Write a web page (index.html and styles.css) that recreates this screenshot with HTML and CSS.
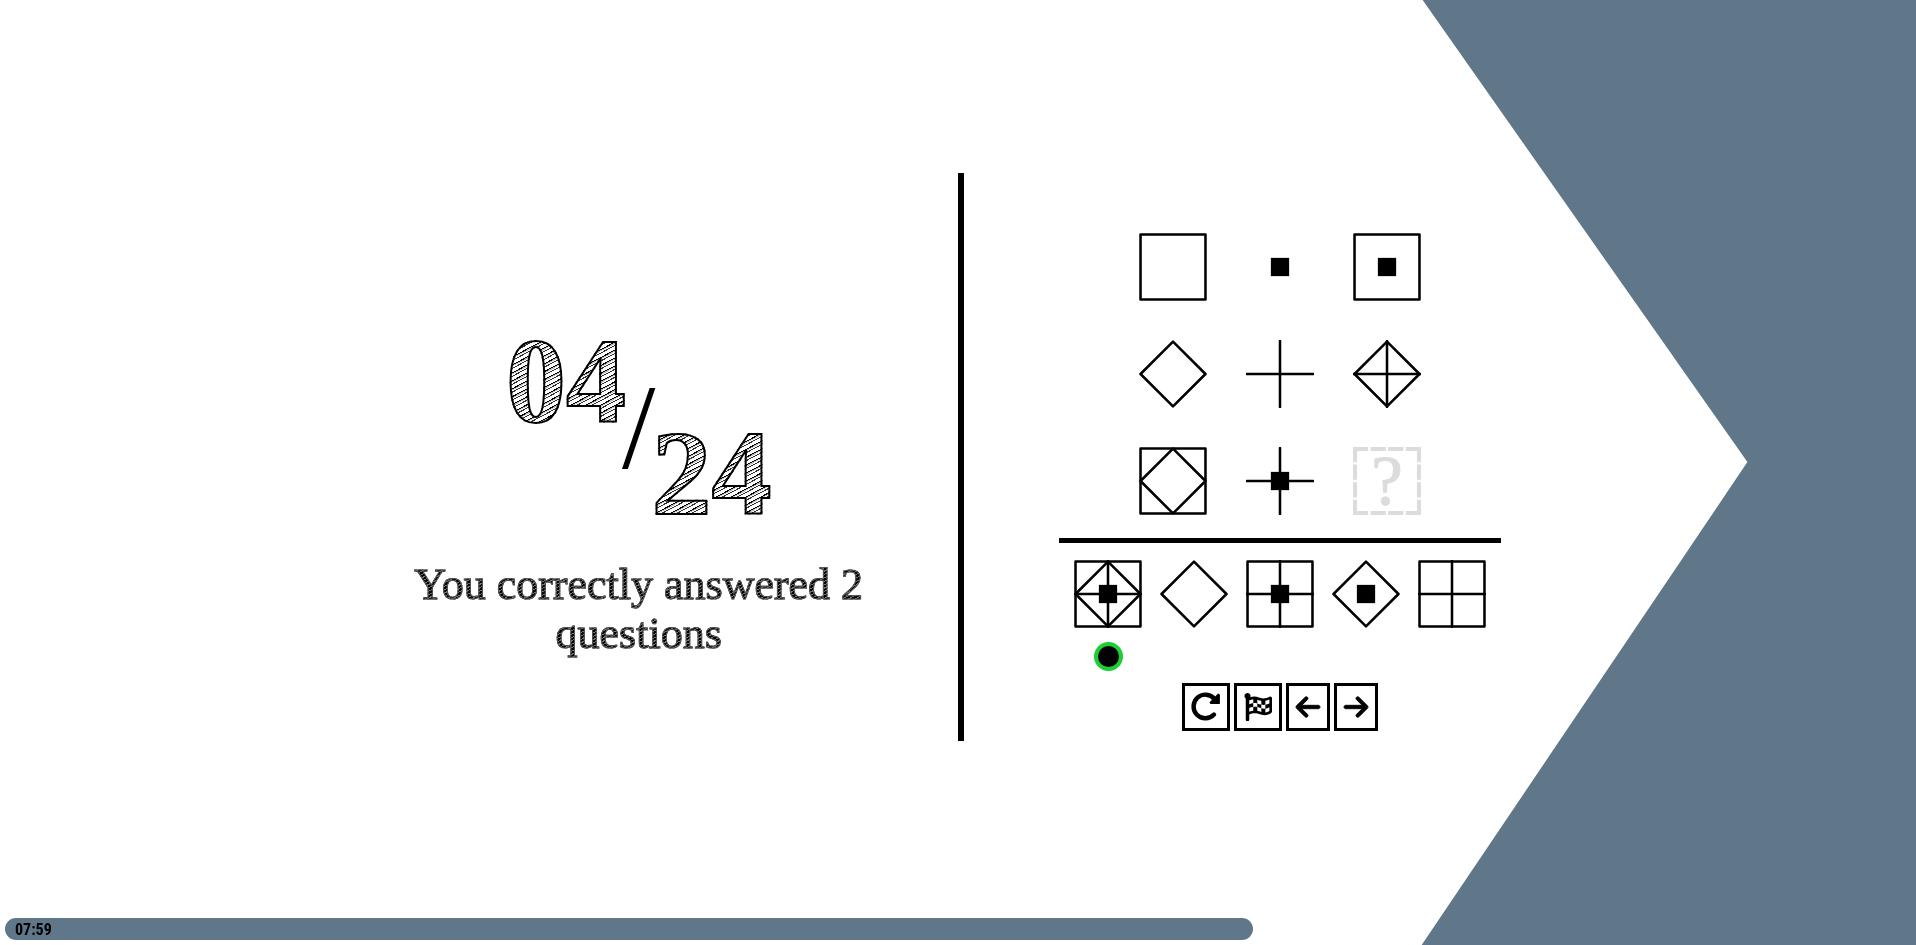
FILE: index.html
```html
<!DOCTYPE html>
<html lang="en">
<head>
<meta charset="utf-8">
<title>Matrix quiz</title>
<link rel="stylesheet" href="styles.css">
</head>
<body>
<svg class="defs" aria-hidden="true">
  <symbol id="square" viewBox="0 0 67 67"><path class="line" d="M1.5 1.5h64v64h-64z"/></symbol>
  <symbol id="diamond" viewBox="0 0 67 67"><path class="line" d="M33.5 1.5l32 32-32 32-32-32z"/></symbol>
  <symbol id="cross" viewBox="0 0 67 67"><path class="line" d="M33.5 1v65M1 33.5h65"/></symbol>
  <symbol id="dot" viewBox="0 0 67 67"><path d="M24.500 24.500h18v18h-18z"/></symbol>
</svg>
<div class="backdrop"></div>
<main class="quiz">
  <section class="score">
    <h1 class="fraction"><span class="sketch">04</span><span class="slash">/</span><span class="sketch total">24</span></h1>
    <p class="summary">You correctly answered 2 questions</p>
  </section>
  <section class="puzzle">
    <div class="board">
      <svg class="cell"><use href="#square"/></svg>
      <svg class="cell"><use href="#dot"/></svg>
      <svg class="cell"><use href="#square"/><use href="#dot"/></svg>
      <svg class="cell"><use href="#diamond"/></svg>
      <svg class="cell"><use href="#cross"/></svg>
      <svg class="cell"><use href="#diamond"/><use href="#cross"/></svg>
      <svg class="cell"><use href="#square"/><use href="#diamond"/></svg>
      <svg class="cell"><use href="#cross"/><use href="#dot"/></svg>
      <svg class="cell" viewBox="0 0 67 67"><path class="dashed" d="M0 2h67M0 65h67M2 0v67M65 0v67"/><text class="unknown" x="33.500" y="57" text-anchor="middle">?</text></svg>
    </div>
    <hr class="rule">
    <form class="answers">
      <label class="answer"><svg class="cell"><use href="#square"/><use href="#diamond"/><use href="#cross"/><use href="#dot"/></svg><input type="radio" name="answer" aria-label="Answer 1" checked></label>
      <label class="answer"><svg class="cell"><use href="#diamond"/></svg><input type="radio" name="answer" aria-label="Answer 2"></label>
      <label class="answer"><svg class="cell"><use href="#square"/><use href="#cross"/><use href="#dot"/></svg><input type="radio" name="answer" aria-label="Answer 3"></label>
      <label class="answer"><svg class="cell"><use href="#diamond"/><use href="#dot"/></svg><input type="radio" name="answer" aria-label="Answer 4"></label>
      <label class="answer"><svg class="cell"><use href="#square"/><use href="#cross"/></svg><input type="radio" name="answer" aria-label="Answer 5"></label>
    </form>
    <nav class="actions">
      <button class="action" type="button" aria-label="Restart"><svg class="icon" viewBox="0 0 28 28"><path d="M22 21.500A11.800 11.800 0 1 1 22.500 6" fill="none" stroke="#000" stroke-width="4.400" stroke-linecap="round"/><path d="M26.300 1.300L27.200 2v8.300H18.700L18.300 9.500z" stroke="#000" stroke-width="1.400" stroke-linejoin="round"/></svg></button>
      <button class="action" type="button" aria-label="Finish"><svg class="icon" viewBox="0 0 512 512"><path d="M243.200 189.900V258c26.100 5.900 49.300 15.600 73.600 22.300v-68.200c-26-5.800-49.400-15.500-73.600-22.200zm223.300-123c-34.300 15.900-76.500 31.900-117 31.900C296 98.800 251.700 64 184.300 64c-25 0-47.300 4.400-68 12 2.800-7.300 4.100-15.200 3.600-23.600C118.100 24 94.800 1.200 66.300 0 34.300-1.300 8 24.300 8 56c0 19 9.500 35.800 24 45.900V488c0 13.300 10.700 24 24 24h16c13.300 0 24-10.700 24-24v-94.400c28.300-12.100 63.600-22.100 114.400-22.100 53.600 0 97.800 34.800 165.200 34.800 48.200 0 86.700-16.300 122.500-40.900 8.700-6 13.800-15.800 13.800-26.400V95.900c.1-23.300-24.200-38.800-45.400-29zM169.600 325.500c-25.800 2.700-50 8.200-73.600 16.600v-70.500c26.200-9.300 47.500-15 73.600-17.400v71.300zM464 191c-23.600 9.800-46.300 19.500-73.600 23.900V286c24.800-3.400 51.400-11.800 73.600-26v70.500c-25.100 16.100-48.500 24.700-73.600 27.100V286c-27 3.700-47.900 1.500-73.600-5.600v67.400c-23.900-7.400-47.300-16.700-73.600-21.300V258c-19.700-4.400-40.800-6.800-73.600-3.800v-70c-22.400 3.100-44.600 10.200-73.600 20.900v-70.500c33.200-12.200 50.100-19.800 73.600-22v71.600c27-3.700 48.400-1.300 73.600 5.700v-67.400c23.700 7.400 47.200 16.700 73.600 21.300v68.400c23.700 5.300 47.600 6.900 73.600 2.700V143c27-4.800 52.300-13.600 73.600-22.500z"/></svg></button>
      <button class="action" type="button" aria-label="Previous question"><svg class="icon narrow" viewBox="0 0 448 512"><path class="arrow" d="M9.400 233.400c-12.500 12.500-12.500 32.800 0 45.300l160 160c12.500 12.500 32.800 12.500 45.300 0s12.500-32.800 0-45.300L109.200 288 416 288c17.700 0 32-14.300 32-32s-14.300-32-32-32l-306.700 0L214.600 118.600c12.500-12.500 12.500-32.800 0-45.300s-32.800-12.500-45.300 0l-160 160z"/></svg></button>
      <button class="action" type="button" aria-label="Next question"><svg class="icon narrow" viewBox="0 0 448 512"><path class="arrow" d="M438.600 278.600c12.500-12.500 12.500-32.800 0-45.300l-160-160c-12.500-12.500-32.800-12.500-45.300 0s-12.500 32.800 0 45.300L338.800 224 32 224c-17.700 0-32 14.300-32 32s14.300 32 32 32l306.700 0L233.400 393.400c-12.500 12.500-12.500 32.800 0 45.300s32.800 12.500 45.300 0l160-160z"/></svg></button>
    </nav>
  </section>
</main>
<footer class="timer"><div class="elapsed" style="width:65.5%">07:59</div></footer>
</body>
</html>
```
FILE: styles.css
```css
* { box-sizing: border-box; }

body {
  margin: 0;
  min-height: 100vh;
  display: flex;
  flex-direction: column;
  background: #fff;
  color: #000;
  font-family: "Liberation Serif", serif;
}

.defs { position: absolute; width: 0; height: 0; }

.backdrop {
  position: fixed;
  inset: 0;
  z-index: -1;
  background: #60778a;
  clip-path: polygon(74.25% 0, 100% 0, 100% 100%, 74.2% 100%, 91.2% 48.9%);
}

.quiz {
  flex: 1;
  display: flex;
  justify-content: center;
  align-items: center;
}

.score, .puzzle { width: 33.33%; }

.score {
  display: flex;
  flex-direction: column;
  align-items: center;
  gap: 40px;
  padding: 80px 80px 0;
}

.fraction {
  display: flex;
  align-items: flex-start;
  margin: 0;
  font-size: 120px;
  font-weight: 700;
  line-height: 92px;
}

.slash { margin: 46px -4px 0; font-weight: 400; }
.total { margin-top: 92px; }

/* pencil-hatched lettering */
.sketch, .summary {
  color: transparent;
  background: repeating-linear-gradient(152deg, #000 0 1px, #bbb 1px 2px, #fff 2px 3px, #333 3px 4px, #fff 4px 7px);
  -webkit-background-clip: text;
  background-clip: text;
}

.sketch { -webkit-text-stroke: 2px #000; }

.summary {
  margin: 0;
  font-size: 44px;
  line-height: 49px;
  text-align: center;
  background-image: repeating-linear-gradient(152deg, #000 0 2px, #777 2px 3px);
  -webkit-text-stroke: 1px #555;
}

.puzzle {
  display: flex;
  flex-direction: column;
  align-items: center;
  padding: 60px 0 10px;
  border-left: 6px solid #000;
}

.cell { display: block; width: 68px; height: 68px; overflow: visible; }
.line { fill: none; stroke: #000; stroke-width: 2.5; stroke-linejoin: round; stroke-linecap: round; }
.dashed { fill: none; stroke: #dcdcdc; stroke-width: 4; stroke-dasharray: 15 2.33; }
.unknown { fill: #dcdcdc; stroke: #dcdcdc; font-size: 70px; }

.board {
  display: grid;
  grid-template-columns: repeat(3, auto);
  gap: 39px;
}

.rule {
  width: 442px;
  height: 5px;
  margin: 23px 0 17px;
  border: 0;
  background: #000;
}

.answers { display: flex; gap: 18px; }

.answer {
  display: flex;
  flex-direction: column;
  align-items: center;
  gap: 14px;
}

.answer input {
  appearance: none;
  width: 29px;
  height: 29px;
  margin: 0;
  border-radius: 50%;
}

.answer input:checked { background: #000; border: 4px solid #1cd033; }

.actions { display: flex; gap: 4px; margin-top: 12px; }

.action {
  padding: 7px;
  background: #fff;
  border: 3px solid #000;
}

.icon { display: block; width: 28px; height: 28px; overflow: visible; }
.narrow { width: 24px; }
.arrow { stroke: #000; stroke-width: 16; }

.timer { padding: 5px; }

.elapsed {
  height: 22px;
  padding-left: 10px;
  border-radius: 11px;
  background: #60778a;
  font: 700 16px/24px "Liberation Sans Narrow", "Roboto Condensed", Roboto, sans-serif;
}
```
